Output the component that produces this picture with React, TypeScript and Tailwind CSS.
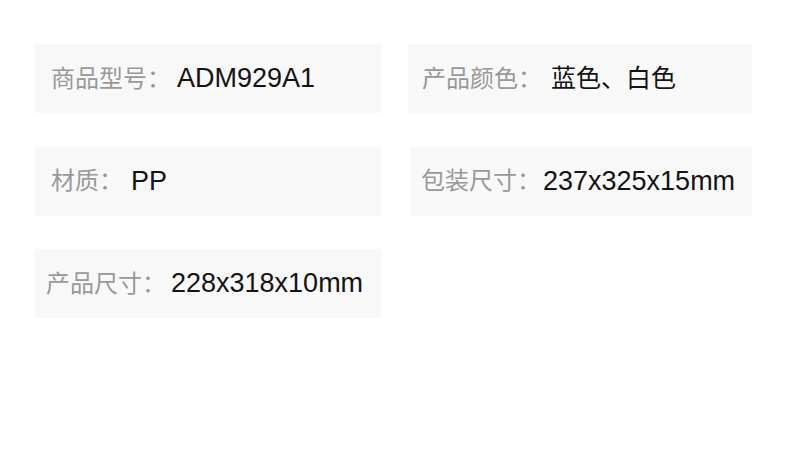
const specs = [
  { label: '商品型号：', value: 'ADM929A1', box: 'ml-0', pad: 'pl-[16px]', gap: 'ml-[6px]', size: 'text-[27px]' },
  { label: '产品颜色：', value: '蓝色、白色', box: 'ml-0', pad: 'pl-[14px]', gap: 'ml-[9px]', size: 'text-[25px]' },
  { label: '材质：', value: 'PP', box: 'ml-0', pad: 'pl-[16px]', gap: 'ml-[8px]', size: 'text-[27px]' },
  { label: '包装尺寸：', value: '237x325x15mm', box: 'ml-[2px]', pad: 'pl-[11px]', gap: 'ml-[2px]', size: 'text-[27px]' },
  { label: '产品尺寸：', value: '228x318x10mm', box: 'ml-0', pad: 'pl-[11px]', gap: 'ml-[5px]', size: 'text-[27px]' },
]

export default function App() {
  return (
    <div
      className="h-[453px] w-[790px] bg-white pl-[35px] pt-[44px]"
      style={{ fontFamily: '"Liberation Sans", "Noto Sans CJK SC", sans-serif' }}
    >
      <div className="grid grid-cols-[346px_344px] gap-x-[27px] gap-y-[33.5px]">
        {specs.map((s) => (
          <div
            key={s.label}
            className={`flex h-[69px] items-center bg-[#f8f8f8] ${s.box} ${s.pad}`}
          >
            <span className="text-[24px] leading-none text-[#999999]">{s.label}</span>
            <span className={`${s.gap} ${s.size} leading-none text-[#141414]`}>{s.value}</span>
          </div>
        ))}
      </div>
    </div>
  )
}
